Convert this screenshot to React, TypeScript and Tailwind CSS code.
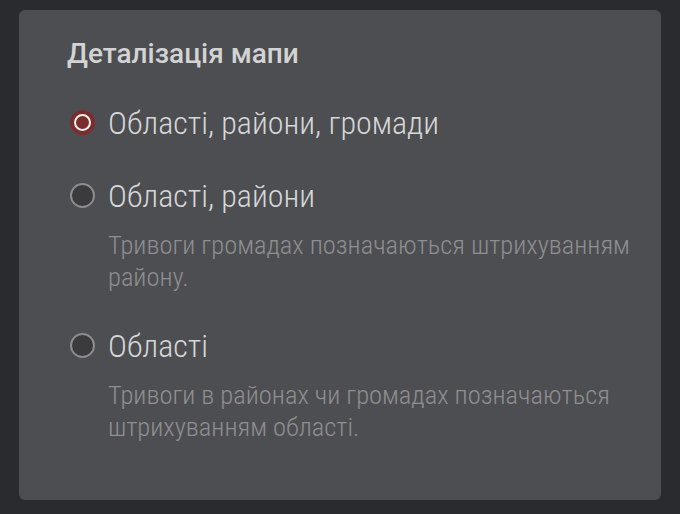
import { useState } from "react";

const options = [
  { id: "all", label: "Області, райони, громади", hint: "" },
  {
    id: "districts",
    label: "Області, райони",
    hint: "Тривоги громадах позначаються штрихуванням району.",
  },
  {
    id: "regions",
    label: "Області",
    hint: "Тривоги в районах чи громадах позначаються штрихуванням області.",
  },
];

function Radio({ checked }: { checked: boolean }) {
  if (checked) {
    return (
      <span className="ml-[3px] flex h-[25px] w-[25px] shrink-0 items-center justify-center rounded-full bg-[#7b2d2e]">
        <span className="h-[17px] w-[17px] rounded-full border-[2.5px] border-[#f2f2f2] bg-[#7b2d2e]" />
      </span>
    );
  }
  return (
    <span className="ml-[3px] h-[25px] w-[25px] shrink-0 rounded-full border-2 border-[#8d8d8f] bg-[#3b3b3d]" />
  );
}

export default function App() {
  const [value, setValue] = useState("all");

  return (
    <main
      className="min-h-screen bg-[#2a2b2f] px-[19px] pt-[10px] pb-[16px]"
      style={{ fontFamily: '"Roboto Condensed", Roboto, sans-serif' }}
    >
      <section className="rounded-[6px] bg-[#4d4e51] pt-[27px] pr-[20px] pb-[57px] pl-[48px]">
        <h2 className="font-['Roboto',sans-serif] text-[28px] leading-[34px] font-medium text-[#d3d3d4]">
          Деталізація мапи
        </h2>
        <div className="mt-[32px] flex flex-col gap-[33px]">
          {options.map((o) => (
            <div key={o.id}>
              <button
                className="flex w-full items-center gap-[13px] text-left"
                onClick={() => setValue(o.id)}
              >
                <span className="-mt-[2px] flex">
                  <Radio checked={value === o.id} />
                </span>
                <span className="text-[32px] leading-[40px] font-light text-[#d7d7d8]">
                  {o.label}
                </span>
              </button>
              {o.hint && (
                <p className="mt-[13px] pl-[41px] text-[26.5px] leading-[32px] font-light text-[#8f8f91]">
                  {o.hint}
                </p>
              )}
            </div>
          ))}
        </div>
      </section>
    </main>
  );
}
